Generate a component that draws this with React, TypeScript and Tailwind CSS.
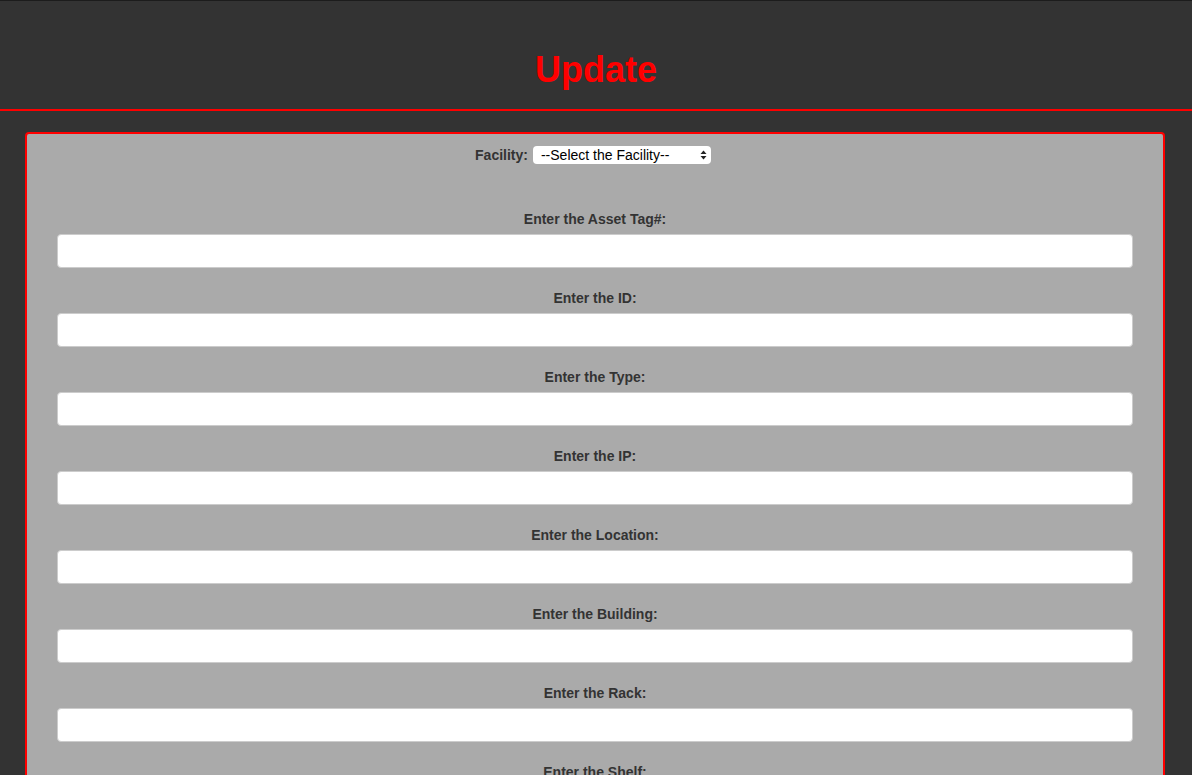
import React from "react";

const fields = [
  "Enter the Asset Tag#:",
  "Enter the ID:",
  "Enter the Type:",
  "Enter the IP:",
  "Enter the Location:",
  "Enter the Building:",
  "Enter the Rack:",
  "Enter the Shelf:",
];

export default function App() {
  return (
    <div
      className="min-h-[775px] bg-[#333333] pb-10"
      style={{ fontFamily: '"Liberation Sans", Arial, Helvetica, sans-serif' }}
    >
      <header className="h-[111px] border-t border-t-[#1c1c1c] border-b-2 border-b-[#ff0000] flex items-start justify-center">
        <h1 className="mt-[47px] text-[36px] leading-[44px] font-bold text-[#ff0000]">Update</h1>
      </header>
      <div className="mt-[21px] ml-[25px] w-[1140px] border-2 border-[#ff0000] rounded-[4px] bg-[#aaaaaa] px-[30px] pt-[11px] pb-[20px]">
        <div className="flex items-center justify-center h-[20px] pr-[4px]">
          <span className="text-[14px] font-bold text-[#333333] mr-[5px]">Facility:</span>
          <div className="relative w-[178px] h-[18px] bg-white rounded-[4px] flex items-center pl-[8px] text-[14px] text-black">
            --Select the Facility--
            <svg className="absolute right-[4px] top-[4px]" width="7" height="10" viewBox="0 0 7 10">
              <path d="M0.5 4 L3.5 0.5 L6.5 4 Z" fill="#222" />
              <path d="M0.5 6 L3.5 9.5 L6.5 6 Z" fill="#222" />
            </svg>
          </div>
        </div>
        <div className="mt-[45px] flex flex-col">
          {fields.map((f) => (
            <div key={f} className="flex flex-col items-stretch mb-[21px]">
              <label className="text-center text-[14px] leading-[16px] pt-[1px] font-bold text-[#333333] mb-[7px]">{f}</label>
              <input
                type="text"
                className="h-[34px] w-full bg-white rounded-[4px] border border-[#cccccc] outline-none px-3"
              />
            </div>
          ))}
        </div>
      </div>
    </div>
  );
}
